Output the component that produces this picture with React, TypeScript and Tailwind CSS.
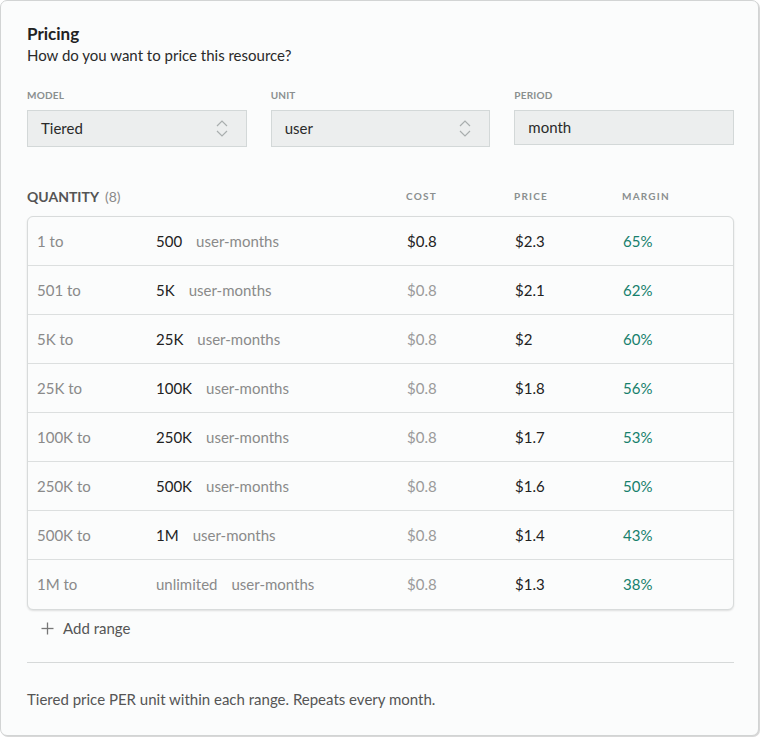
import React from 'react';

interface Tier {
  from: string;
  to: string;
  cost: string;
  price: string;
  margin: string;
}

// Tier rows shown in the quantity table
const tiers: Tier[] = [
  { from: '1 to', to: '500', cost: '$0.8', price: '$2.3', margin: '65%' },
  { from: '501 to', to: '5K', cost: '$0.8', price: '$2.1', margin: '62%' },
  { from: '5K to', to: '25K', cost: '$0.8', price: '$2', margin: '60%' },
  { from: '25K to', to: '100K', cost: '$0.8', price: '$1.8', margin: '56%' },
  { from: '100K to', to: '250K', cost: '$0.8', price: '$1.7', margin: '53%' },
  { from: '250K to', to: '500K', cost: '$0.8', price: '$1.6', margin: '50%' },
  { from: '500K to', to: '1M', cost: '$0.8', price: '$1.4', margin: '43%' },
  { from: '1M to', to: 'unlimited', cost: '$0.8', price: '$1.3', margin: '38%' },
];

const UpDownIcon = () => (
  <svg width="12" height="17" viewBox="0 0 12 17" fill="none" stroke="#a9aeae" strokeWidth="1.2">
    <path d="M1 6 L6 1 L11 6" />
    <path d="M1 11 L6 16 L11 11" />
  </svg>
);

const PlusIcon = () => (
  <svg width="13" height="13" viewBox="0 0 13 13" fill="none" stroke="#777" strokeWidth="1.3">
    <path d="M6.5 0.5 V12.5" />
    <path d="M0.5 6.5 H12.5" />
  </svg>
);

const FieldLabel: React.FC<{ children: React.ReactNode }> = ({ children }) => (
  <div className="text-[10px] font-bold tracking-[0.02em] text-[#8a8f8f] uppercase leading-none mb-[10px]">
    {children}
  </div>
);

const SelectBox: React.FC<{ value: string; chevron?: boolean; tall?: boolean }> = ({ value, chevron, tall }) => (
  <div
    className={`flex items-center justify-between bg-[#eceeee] border border-[#d3d8d8] pl-[13px] pr-[18px] text-[15px] text-[#2a2a2a] ${
      tall ? 'h-[37px]' : 'h-[35px]'
    }`}
  >
    <span>{value}</span>
    {chevron && <UpDownIcon />}
  </div>
);

export default function App() {
  return (
    <div className="w-[760px] h-[737px] bg-white" style={{ fontFamily: 'Lato, "Noto Sans", sans-serif' }}>
      <div className="w-[759px] h-[736px] bg-[#fbfcfc] border border-[#d2d4d4] rounded-[7px] shadow-[1px_1px_0_#d8d8d8] pl-[26px] pr-[24px] pt-[22px]">
        <div className="text-[17px] font-bold text-[#222] leading-[22px]">Pricing</div>
        <div className="text-[15px] text-[#2a2a2a] leading-[20px]">How do you want to price this resource?</div>

        <div className="grid grid-cols-3 gap-6 mt-[25px]">
          <div>
            <FieldLabel>Model</FieldLabel>
            <SelectBox value="Tiered" chevron tall />
          </div>
          <div>
            <FieldLabel>Unit</FieldLabel>
            <SelectBox value="user" chevron tall />
          </div>
          <div>
            <FieldLabel>Period</FieldLabel>
            <SelectBox value="month" />
          </div>
        </div>

        <div className="flex items-end mt-[42px] mb-[12px]">
          <div className="w-[379px] text-[14px] leading-none">
            <span className="font-bold text-[#555]">QUANTITY</span>
            <span className="text-[#8a8a8a] ml-[6px]">(8)</span>
          </div>
          <div className="w-[108px] text-[10px] font-bold tracking-[0.12em] text-[#8a8f8f]">COST</div>
          <div className="w-[108px] text-[10px] font-bold tracking-[0.12em] text-[#8a8f8f]">PRICE</div>
          <div className="text-[10px] font-bold tracking-[0.12em] text-[#8a8f8f]">MARGIN</div>
        </div>

        <div className="bg-[#fbfcfc] border border-[#d8dbdb] rounded-[6px] shadow-[0_1px_2px_rgba(0,0,0,0.12)]">
          {tiers.map((tier, i) => {
            const isFirst = i === 0;
            const isLast = i === tiers.length - 1;
            return (
              <div
                key={tier.from}
                className={`flex items-center h-[49px] pl-[9px] text-[15px] ${
                  isLast ? '' : 'border-b border-[#dcdfdf]'
                }`}
              >
                <div className="w-[119px] text-[#8a8a8a]">{tier.from}</div>
                <div className="w-[251px] flex items-center gap-[14px]">
                  <span className={isLast ? 'text-[#8a8a8a]' : 'text-[#222]'}>{tier.to}</span>
                  <span className="text-[#8a8a8a]">user-months</span>
                </div>
                <div className={`w-[108px] ${isFirst ? 'text-[#222]' : 'text-[#9a9a9a]'}`}>{tier.cost}</div>
                <div className="w-[108px] text-[#222]">{tier.price}</div>
                <div className="text-[#16806c]">{tier.margin}</div>
              </div>
            );
          })}
        </div>

        <div className="flex items-center gap-[9px] pl-[14px] mt-[8px] h-[20px] text-[15px] text-[#555]">
          <PlusIcon />
          <span>Add range</span>
        </div>

        <div className="border-t border-[#d6d9d9] mt-[24px]" />

        <div className="text-[15px] text-[#555] mt-[25px]">Tiered price PER unit within each range. Repeats every month.</div>
      </div>
    </div>
  );
}
